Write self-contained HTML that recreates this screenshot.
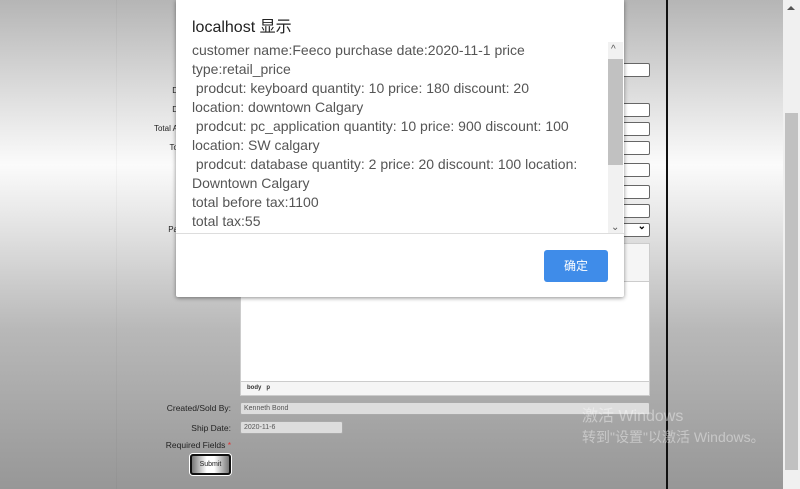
<!DOCTYPE html>
<html><head><meta charset="utf-8"><style>
*{margin:0;padding:0;box-sizing:border-box}
body{width:800px;height:489px;overflow:hidden;position:relative;font-family:"Liberation Sans","Noto Sans CJK SC",sans-serif;
background:linear-gradient(#b5b5b5 0px,#e0e0e0 100px,#fbfbfb 165px,#e2e2e2 230px,#b8b8b8 330px,#979797 489px)}
.vl{position:absolute;left:116px;top:0;width:1px;height:489px;background:rgba(0,0,0,.03)}
.bl{position:absolute;left:666px;top:0;width:2px;height:489px;background:#111}
.sb{position:absolute;left:783px;top:0;width:17px;height:489px;background:#f0f0f0}
.sb .th{position:absolute;left:2px;top:113px;width:13px;height:357px;background:#c1c1c1}
.lab{position:absolute;font-size:8px;color:#222;text-align:right;white-space:nowrap;overflow:hidden}
.in{position:absolute;left:240px;width:410px;height:14px;background:#fff;border:1px solid #666;border-radius:2px}
.dlg{position:absolute;left:176px;top:0;width:448px;height:297px;background:#fff;box-shadow:0 1px 4px rgba(0,0,0,.45);border-radius:0 0 2px 2px}
.t{position:absolute;left:16px;top:13px;font-size:16px;color:#222}
.c{position:absolute;left:16px;top:41px;width:415px;height:192px;overflow:hidden;font-size:14px;line-height:19px;color:#555;white-space:nowrap}
.isb{position:absolute;left:432px;top:42px;width:15px;height:191px;background:#f1f1f1}
.isb .th{position:absolute;left:0;top:17px;width:15px;height:106px;background:#c1c1c1}
.btn{position:absolute;left:368px;top:250px;width:64px;height:32px;background:#3f8ce9;border-radius:3px;color:#fff;font-size:12px;text-align:center;line-height:32px}
.wm{position:absolute;left:582px;color:rgba(255,255,255,.4);font-size:14px}
</style></head><body>
<div class="vl"></div>
<div class="bl"></div>
<div class="sb"><div style="position:absolute;left:4px;top:6px;border:4px solid transparent;border-bottom:4px solid #555;border-top:0"></div><div class="th"></div></div>
<div class="lab" style="left:140px;top:86px;width:38px">D</div>
<div class="lab" style="left:140px;top:105px;width:38px">D</div>
<div class="lab" style="left:140px;top:124px;width:38px">Total A</div>
<div class="lab" style="left:140px;top:143px;width:38px">To</div>
<div class="lab" style="left:140px;top:225px;width:38px">Pa</div>
<div class="in" style="top:63px"></div>
<div class="in" style="top:103px"></div>
<div class="in" style="top:122px"></div>
<div class="in" style="top:141px"></div>
<div class="in" style="top:163px"></div>
<div class="in" style="top:185px"></div>
<div class="in" style="top:204px"></div>
<div class="in" style="top:223px"><span style="position:absolute;right:3px;top:-3px;font-size:10px;font-weight:bold">⌄</span></div>
<div style="position:absolute;left:240px;top:243px;width:410px;height:153px;background:#fff;border:1px solid #ccc">
<div style="position:absolute;left:0;top:0;right:0;height:38px;background:#f5f5f5;border-bottom:1px solid #ccc"></div>
<div style="position:absolute;left:0;bottom:0;right:0;height:14px;background:#f5f5f5;border-top:1px solid #ccc;font-size:6px;padding:3px 6px;font-weight:bold;color:#333">body &nbsp; p</div></div>
<div class="lab" style="left:100px;top:403px;width:131px;font-size:8.5px">Created/Sold By:</div>
<div class="in" style="top:402px;width:410px;height:13px;background:#ddd;border-color:#aaa;font-size:7px;color:#555;padding:2px 3px">Kenneth Bond</div>
<div class="lab" style="left:100px;top:423px;width:131px;font-size:8.5px">Ship Date:</div>
<div class="in" style="top:421px;width:103px;height:13px;background:#ddd;border-color:#aaa;font-size:7px;color:#555;padding:2px 3px">2020-11-6</div>
<div class="lab" style="left:100px;top:440px;width:131px;font-size:8.5px">Required Fields <span style="color:#d33">*</span></div>
<div style="position:absolute;left:190px;top:454px;width:41px;height:21px;border:2px solid #111;border-radius:3px;background:linear-gradient(90deg,#777,#fff 40%,#fff 60%,#777);box-shadow:0 0 0 1px #fff;font-size:7px;text-align:center;line-height:17px;color:#222">Submit</div>
<div class="wm" style="top:402px;font-size:16px">激活 Windows</div>
<div class="wm" style="top:427px">转到"设置"以激活 Windows。</div>
<div class="dlg">
<div class="t">localhost 显示</div>
<div class="c">customer name:Feeco purchase date:2020-11-1 price<br>type:retail_price<br>&nbsp;prodcut: keyboard quantity: 10 price: 180 discount: 20<br>location: downtown Calgary<br>&nbsp;prodcut: pc_application quantity: 10 price: 900 discount: 100<br>location: SW calgary<br>&nbsp;prodcut: database quantity: 2 price: 20 discount: 100 location:<br>Downtown Calgary<br>total before tax:1100<br>total tax:55</div>
<div class="isb"><div style="position:absolute;left:3px;top:2px;font-size:10px;color:#555">^</div><div class="th"></div><div style="position:absolute;left:3px;bottom:0;font-size:10px;color:#555">⌄</div></div>
<div style="position:absolute;left:0;top:233px;width:448px;height:1px;background:#ddd"></div>
<div class="btn">确定</div>
</div>
</body></html>
